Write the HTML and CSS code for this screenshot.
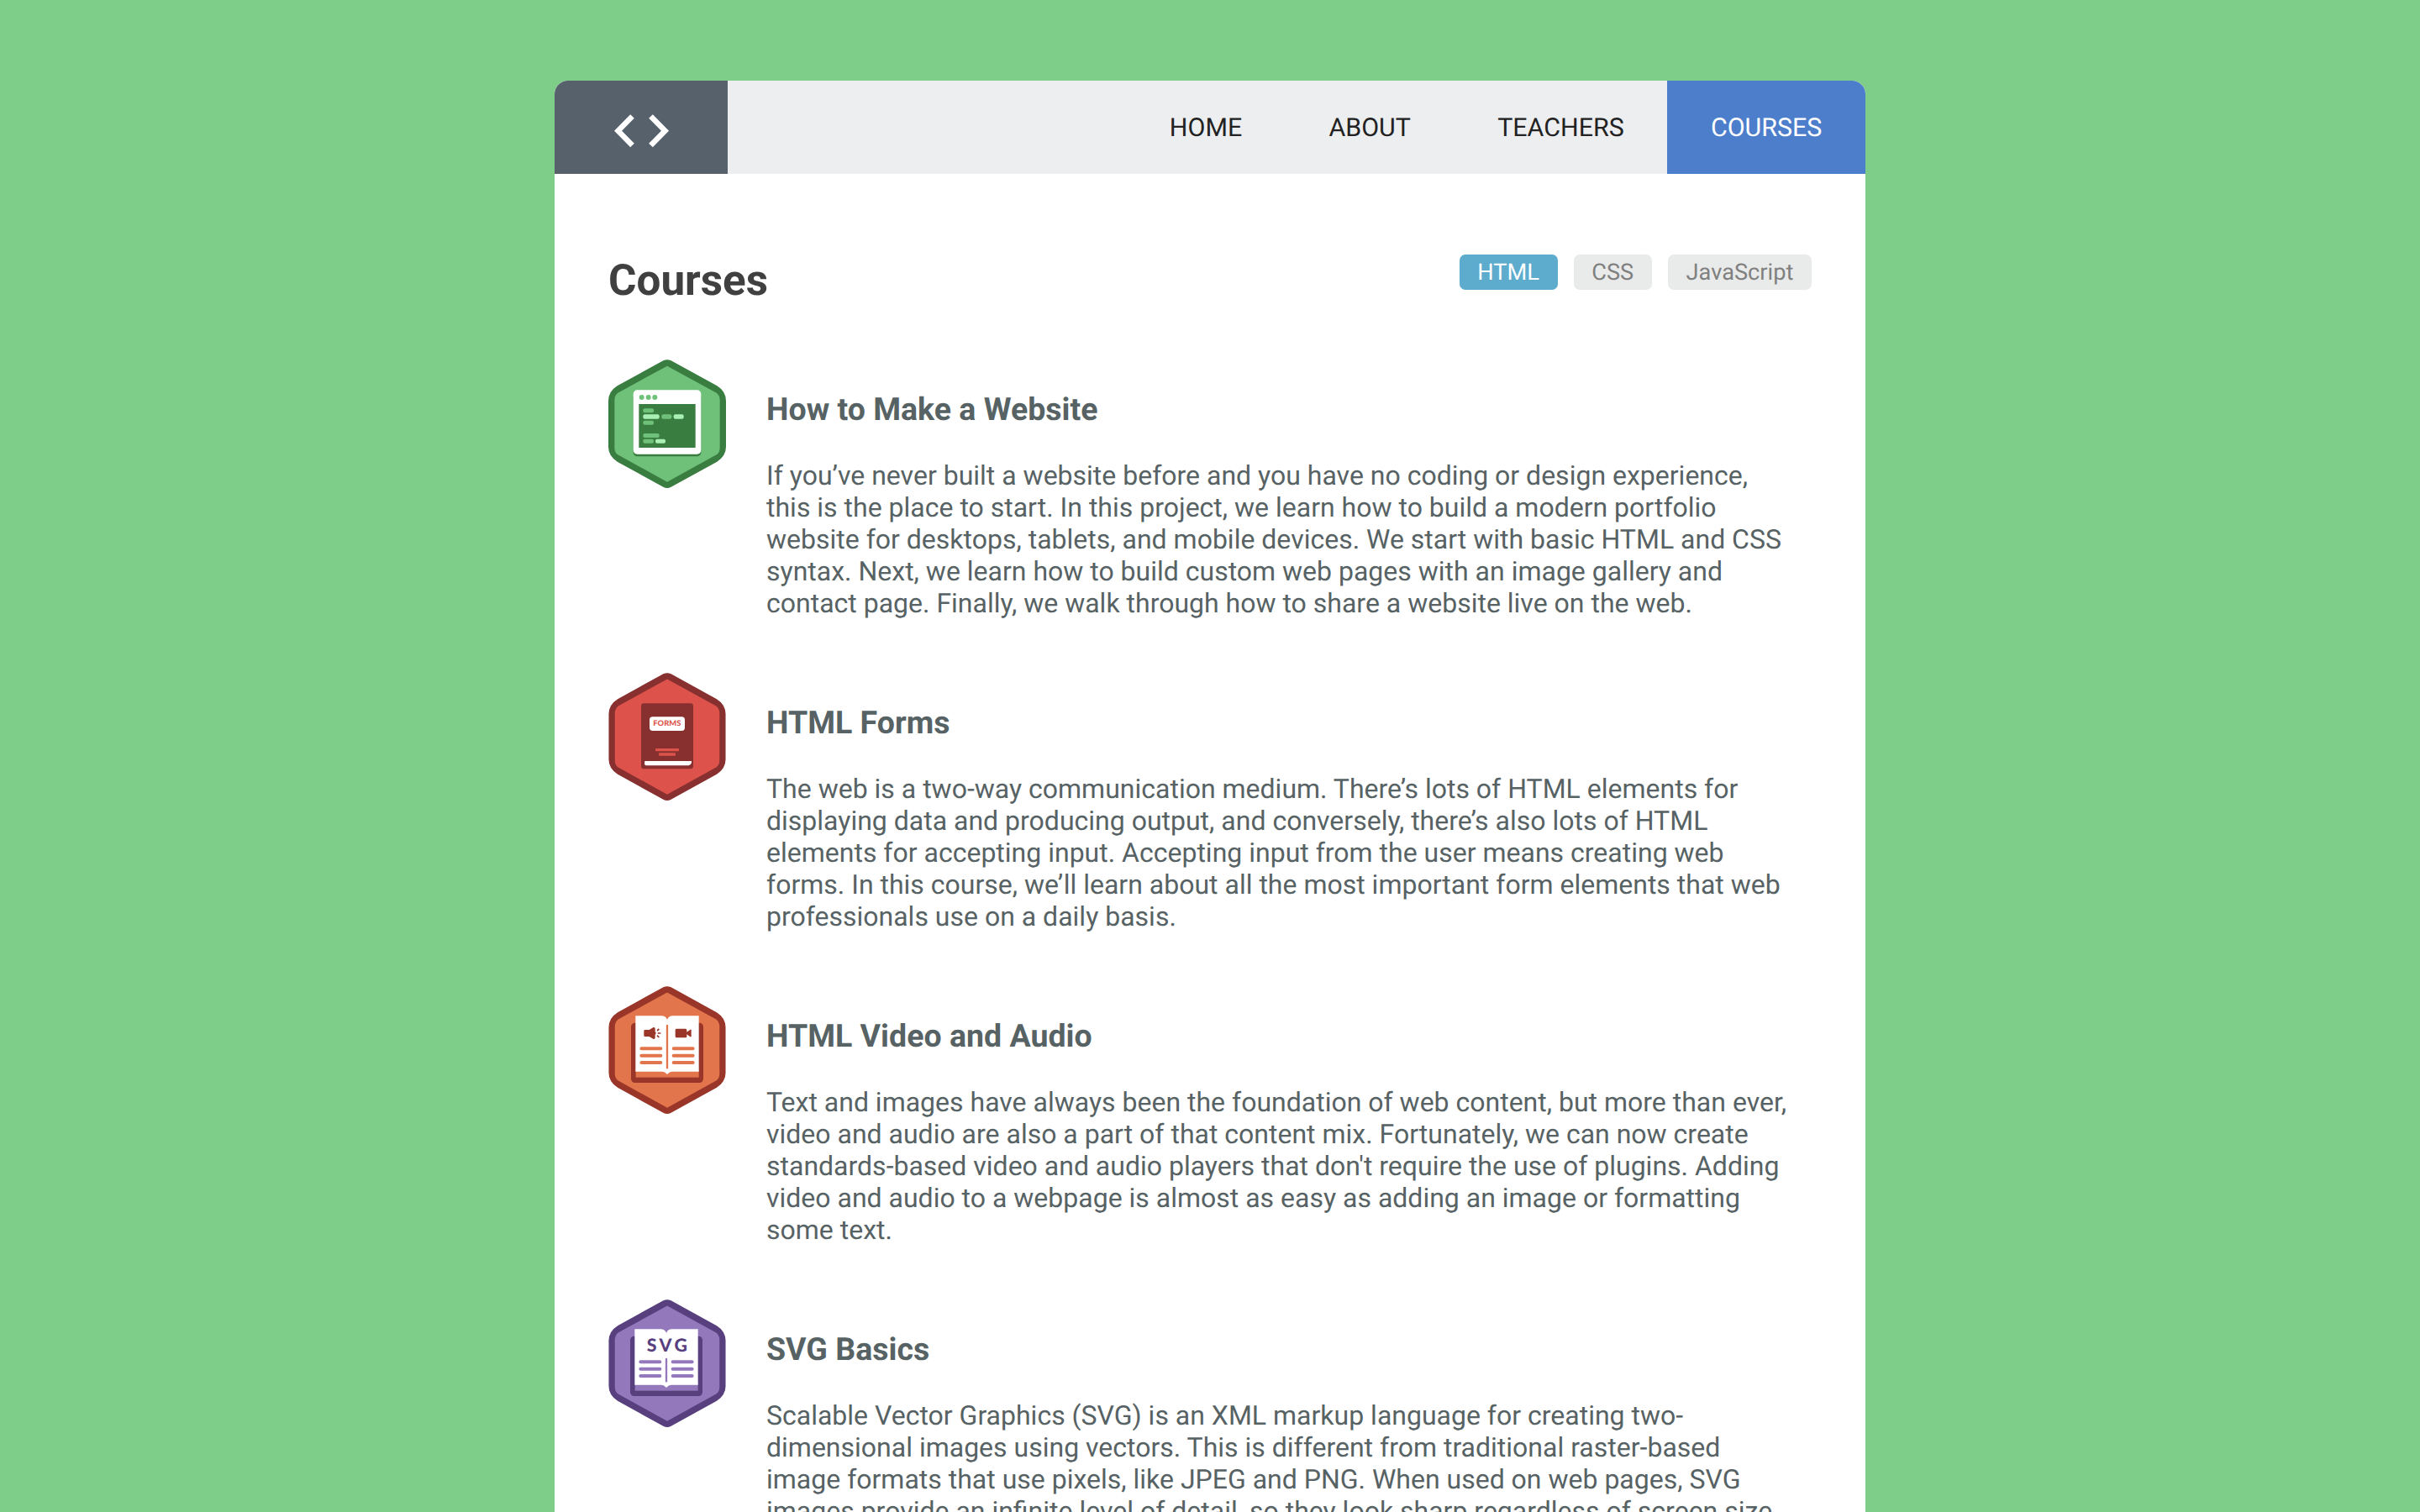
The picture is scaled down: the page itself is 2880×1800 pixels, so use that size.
FILE: index.html
```html
<!DOCTYPE html>
<html lang="en">
<head>
<meta charset="utf-8">
<title>Courses</title>
<link rel="stylesheet" href="styles.css">
</head>
<body>
<svg class="defs" aria-hidden="true">
  <symbol id="hexagon" viewBox="42 38 420 460">
    <path class="hex-edge" d="M238 42Q252 35 266 42L430 132Q462 152 462 186V350Q462 382 430 403L266 493Q252 501 238 493L74 403Q42 382 42 350V186Q42 152 74 132Z"/>
    <path class="hex-face" d="M252 61L428 157Q440 166 440 184V352Q440 370 428 378L252 475L76 378Q64 370 64 352V184Q64 166 76 157Z"/>
  </symbol>
</svg>
<div class="card">
  <header class="topbar">
    <a class="logo"><svg width="66" height="40" viewBox="0 0 66 40"><path d="M21.5 2.5L4.5 19.7L21.5 37M43.5 2.5L60.5 19.7L43.5 37"/></svg></a>
    <nav class="nav">
      <a class="nav-link">HOME</a>
      <a class="nav-link">ABOUT</a>
      <a class="nav-link">TEACHERS</a>
      <a class="nav-link active">COURSES</a>
    </nav>
  </header>
  <main class="content">
    <div class="title-row">
      <h1>Courses</h1>
      <div class="tags"><a class="tag selected">HTML</a><a class="tag">CSS</a><a class="tag">JavaScript</a></div>
    </div>

    <article class="course green">
      <svg class="badge" viewBox="42 38 420 460">
        <use href="#hexagon" x="42" y="38" width="420" height="460"/>
        <rect class="edge" x="131" y="160" width="242" height="224" rx="14"/>
        <rect class="paper" x="131" y="147" width="242" height="229" rx="14"/>
        <rect class="edge" x="151" y="197" width="202" height="156"/>
        <g class="face"><circle cx="161" cy="173" r="9"/><circle cx="185" cy="173" r="9"/><circle cx="208" cy="173" r="9"/>
          <rect x="166" y="213" width="38" height="15" rx="6"/><rect x="232" y="234" width="36" height="16" rx="6"/><rect x="166" y="256" width="38" height="15" rx="6"/><rect x="166" y="302" width="58" height="15" rx="6"/><rect x="166" y="322" width="38" height="15" rx="6"/></g>
        <g class="light"><rect x="166" y="234" width="58" height="16" rx="6"/><rect x="275" y="234" width="36" height="16" rx="6"/><rect x="210" y="322" width="36" height="15" rx="6"/></g>
      </svg>
      <div class="body">
        <h2>How to Make a Website</h2>
        <p>If you’ve never built a website before and you have no coding or design experience, this is the place to start. In this project, we learn how to build a modern portfolio website for desktops, tablets, and mobile devices. We start with basic HTML and CSS syntax. Next, we learn how to build custom web pages with an image gallery and contact page. Finally, we walk through how to share a website live on the web.</p>
      </div>
    </article>

    <article class="course red">
      <svg class="badge" viewBox="42 38 420 460">
        <use href="#hexagon" x="42" y="38" width="420" height="457"/>
        <rect class="edge" x="159" y="147" width="186" height="234" rx="9"/>
        <rect class="paper" x="189" y="195" width="126" height="50" rx="11"/>
        <text class="label forms" x="202" y="228" textLength="99" lengthAdjust="spacingAndGlyphs">FORMS</text>
        <rect class="face" x="210" y="308" width="84" height="10" rx="3"/><rect class="face" x="222" y="324" width="60" height="10" rx="3"/>
        <path class="paper" d="M172 353H339V359Q337 367 329 369H176Q171 368 171 362Z"/>
      </svg>
      <div class="body">
        <h2>HTML Forms</h2>
        <p>The web is a two-way communication medium. There’s lots of HTML elements for displaying data and producing output, and conversely, there’s also lots of HTML elements for accepting input. Accepting input from the user means creating web forms. In this course, we’ll learn about all the most important form elements that web professionals use on a daily basis.</p>
      </div>
    </article>

    <article class="course orange">
      <svg class="badge" viewBox="42 38 420 460">
        <use href="#hexagon" x="42" y="38" width="420" height="457"/>
        <rect class="edge" x="123" y="169" width="258" height="214" rx="14"/>
        <rect class="face" x="140" y="335" width="225" height="29"/>
        <path class="paper" d="M139 144H232Q246 144 252 157Q258 144 272 144H365V343H270Q261 343 258 348L252 353L246 348Q243 343 234 343H139Z"/>
        <path class="spine" d="M252 179V330"/>
        <path class="lines" d="M160 261H229M160 286H229M160 311H229M275 261H344M275 286H344M275 311H344"/>
        <path class="edge" d="M173 194H188L203 185Q209 184 209 190V201Q215 206 209 211V222Q209 228 203 227L188 218H173Q169 218 169 214V198Q169 194 173 194Z"/>
        <path class="sound" d="M216 197L223 191M218 206H229M216 214L223 221"/>
        <path class="edge" d="M285 190H318Q322 190 322 195V202L334 193H338V219H334L322 210V217Q322 222 318 222H285Q281 222 281 217V195Q281 190 285 190Z"/>
      </svg>
      <div class="body">
        <h2>HTML Video and Audio</h2>
        <p>Text and images have always been the foundation of web content, but more than ever, video and audio are also a part of that content mix. Fortunately, we can now create standards-based video and audio players that don't require the use of plugins. Adding video and audio to a webpage is almost as easy as adding an image or formatting some text.</p>
      </div>
    </article>

    <article class="course purple">
      <svg class="badge" viewBox="42 38 420 460">
        <use href="#hexagon" x="42" y="38" width="420" height="457"/>
        <rect class="edge" x="120" y="169" width="258" height="214" rx="14"/>
        <rect class="face" x="137" y="335" width="225" height="29"/>
        <path class="paper" d="M136 144H229Q243 144 249 157Q255 144 269 144H362V343H267Q258 343 255 348L249 353L243 348Q240 343 231 343H136Z"/>
        <path class="spine" d="M249 251V330"/>
        <path class="lines" d="M157 261H226M157 286H226M157 311H226M272 261H341M272 286H341M272 311H341"/>
        <text class="label svg" x="179" y="225" textLength="145" lengthAdjust="spacing">SVG</text>
      </svg>
      <div class="body">
        <h2>SVG Basics</h2>
        <p>Scalable Vector Graphics (SVG) is an XML markup language for creating two-dimensional images using vectors. This is different from traditional raster-based image formats that use pixels, like JPEG and PNG. When used on web pages, SVG images provide an infinite level of detail, so they look sharp regardless of screen size.</p>
      </div>
    </article>
  </main>
</div>
</body>
</html>
```
FILE: styles.css
```css
* { box-sizing: border-box; }
body {
  margin: 0;
  height: 1800px;
  overflow: hidden;
  background: #7ece89;
  font-family: Roboto, sans-serif;
  font-size: 32px;
  text-rendering: geometricPrecision;
}
.defs { display: none; }
.card {
  width: 1560px;
  min-height: 1704px;
  margin: 96px auto 0;
  background: #fff;
  border-radius: 16px 16px 0 0;
  overflow: hidden;
}
.topbar { display: flex; height: 111px; background: #edeef0; }
.logo { display: flex; width: 206px; padding: 40px 0 0 71px; background: #57616b; }
.logo path { fill: none; stroke: #fff; stroke-width: 6.5; }
.nav { display: flex; margin-left: auto; }
.nav-link {
  height: 111px;
  padding: 0 51.6px;
  font-size: 30.4px;
  line-height: 113px;
  color: #222;
}
.nav-link.active { background: #4d7ecb; color: #fff; }
.content { padding: 96px 64px 0; }
.title-row { display: flex; justify-content: space-between; height: 125px; }
h1 { margin: 0; font-size: 51.2px; line-height: 61px; color: #404040; }
.tags { display: flex; gap: 19px; }
.tag {
  height: 42px;
  padding: 0 21.7px;
  border-radius: 7px;
  background: #e9ebea;
  color: #808080;
  font-size: 27.2px;
  line-height: 42px;
}
.tag.selected { background: #5dabcd; color: #fff; }
.course { display: flex; gap: 48px; height: 373px; }
.badge { flex: none; width: 140px; height: 153.33px; }
.body { width: 1222px; color: #576264; }
h2 { margin: 37px 0 36px; font-size: 37.5px; line-height: 46px; }
p { margin: 0; line-height: 38px; }

.hex-edge, .edge { fill: var(--edge); }
.hex-face, .face { fill: var(--face); }
.paper { fill: #fff; }
.light { fill: #a9f0b4; }
.spine { stroke: var(--face); stroke-width: 7; stroke-linecap: round; }
.lines { stroke: var(--face); stroke-width: 12; stroke-linecap: round; }
.sound { fill: none; stroke: var(--edge); stroke-width: 5; }
.label { font-weight: 700; }
.forms { font: 900 27px Lato, sans-serif; fill: var(--face); }
.svg { font: 900 64px Lato, sans-serif; fill: var(--edge); }
.green { --edge: #3a7d40; --face: #6fc17a; }
.red { --edge: #87302f; --face: #dd534c; }
.orange { --edge: #993629; --face: #e2754b; }
.purple { --edge: #583f7e; --face: #9478bc; }
```
